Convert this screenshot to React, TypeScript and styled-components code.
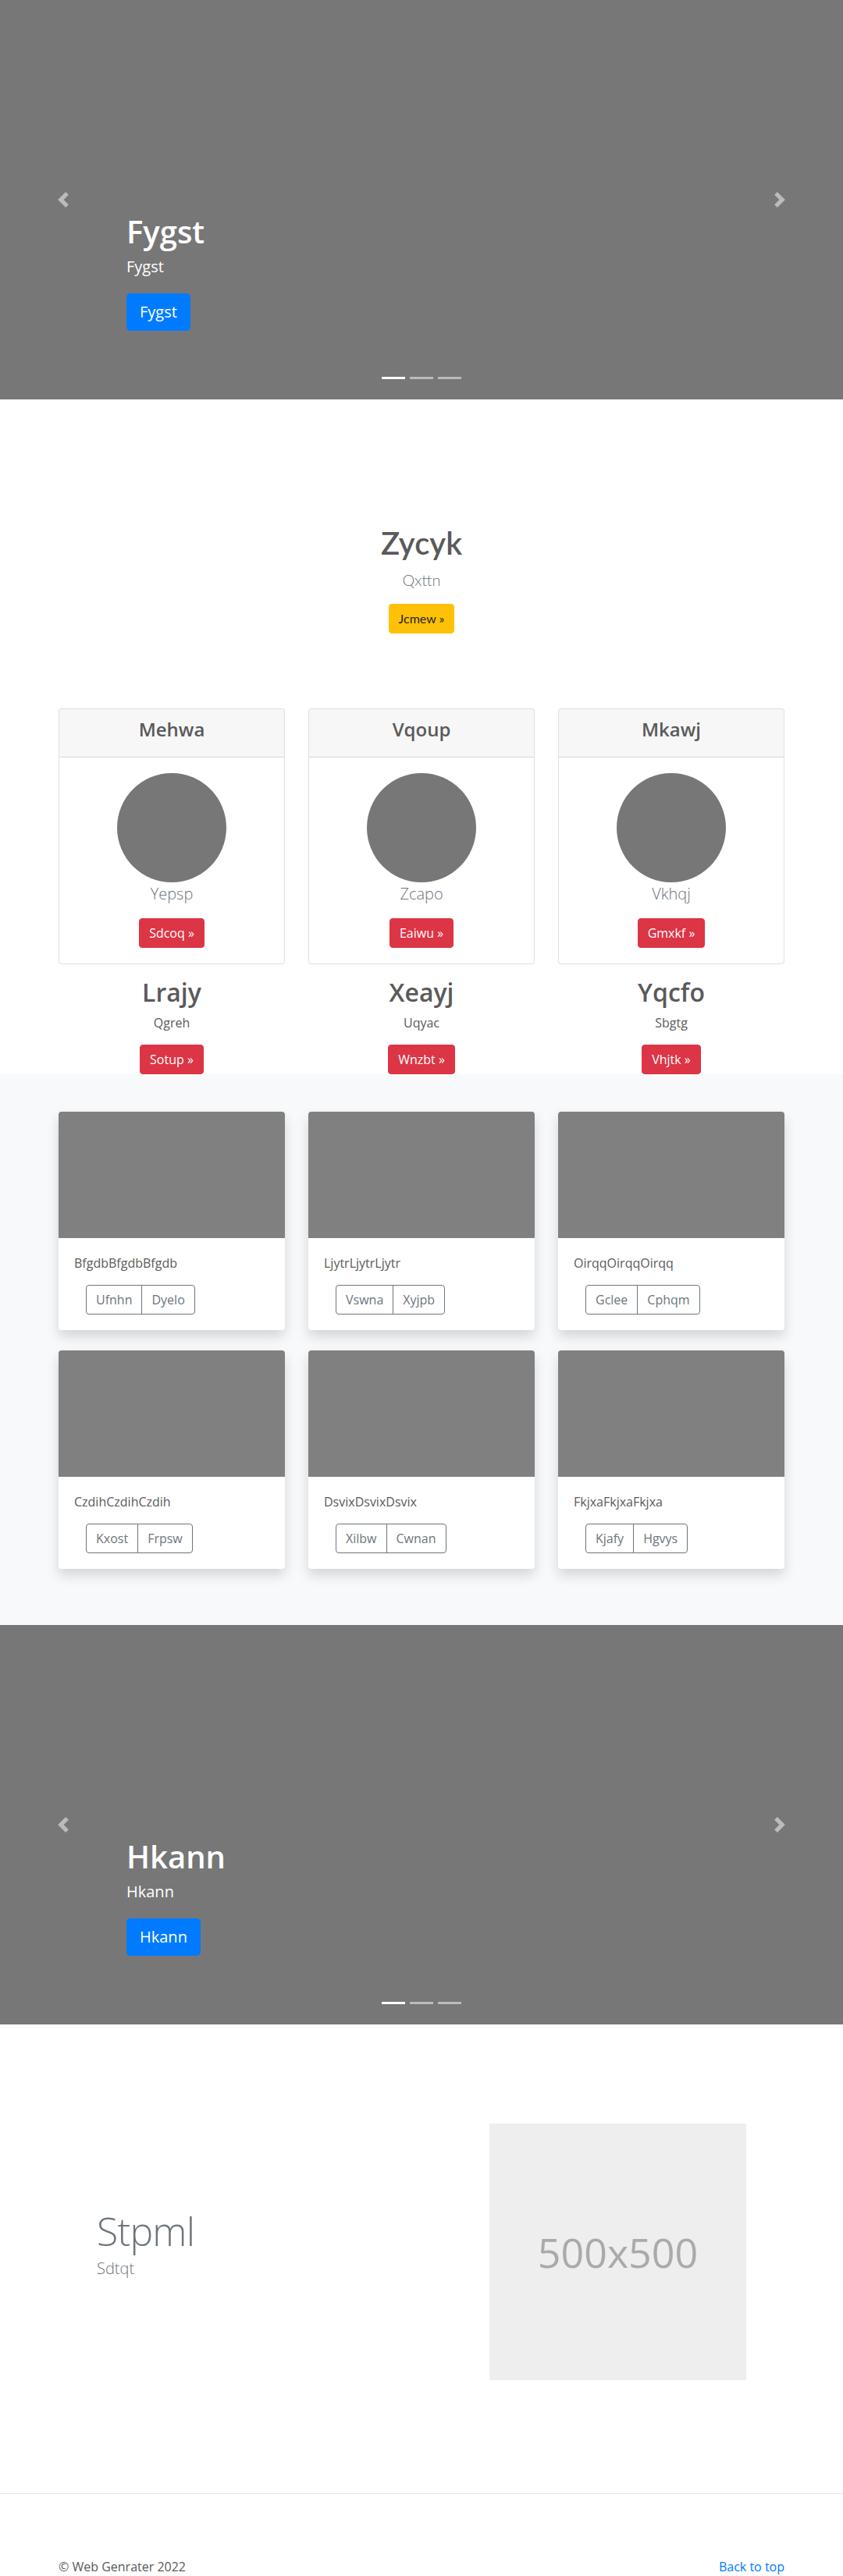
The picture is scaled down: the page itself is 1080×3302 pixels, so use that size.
import styled, { createGlobalStyle } from 'styled-components'

const GlobalStyle = createGlobalStyle`
  * {
    box-sizing: border-box;
  }
  body {
    margin: 0;
    font-family: "Open Sans", "Noto Sans", sans-serif;
    font-size: 16px;
    line-height: 1.5;
    color: #5a5a5a;
    background: #fff;
  }
`

const Carousel = styled.section<{ $mb?: number }>`
  position: relative;
  height: 512px;
  background-color: #777;
  margin-bottom: ${(p) => p.$mb ?? 0}px;
  overflow: hidden;
`

const Control = styled.a<{ $side: 'prev' | 'next' }>`
  position: absolute;
  top: 0;
  bottom: 0;
  ${(p) => (p.$side === 'prev' ? 'left: 0;' : 'right: 0;')}
  width: 15%;
  display: flex;
  align-items: center;
  justify-content: center;
  opacity: 0.5;
  z-index: 2;
`

const Indicators = styled.ol`
  position: absolute;
  left: 0;
  right: 0;
  bottom: 0;
  margin: 0 0 16px;
  padding: 0;
  display: flex;
  justify-content: center;
  list-style: none;
  z-index: 2;
`

const Dot = styled.li<{ $active?: boolean }>`
  width: 30px;
  height: 3px;
  margin: 10px 3px;
  background-color: #fff;
  opacity: ${(p) => (p.$active ? 1 : 0.5)};
`

const Caption = styled.div`
  position: absolute;
  left: 15%;
  right: 15%;
  bottom: 48px;
  padding: 20px 0;
  color: #fff;
  text-align: left;
  z-index: 1;
`

const CaptionTitle = styled.h1`
  margin: 0 0 6px;
  font-size: 40px;
  font-weight: 600;
  line-height: 1.2;
`

const CaptionText = styled.p`
  margin: 0 0 19px;
  font-size: 20px;
  line-height: 1.5;
`

const CaptionActions = styled.div`
  display: flex;
  margin-bottom: 20px;
`

const Button = styled.a<{ $variant: 'primary' | 'warning' | 'danger'; $lg?: boolean }>`
  display: inline-block;
  padding: ${(p) => (p.$lg ? '8px 16px' : '6px 12px')};
  font-size: ${(p) => (p.$lg ? '20px' : '16px')};
  line-height: 1.5;
  border: 1px solid transparent;
  border-radius: ${(p) => (p.$lg ? '4.8px' : '4px')};
  text-decoration: none;
  white-space: nowrap;
  color: ${(p) => (p.$variant === 'warning' ? '#212529' : '#fff')};
  background-color: ${(p) =>
    p.$variant === 'primary' ? '#007bff' : p.$variant === 'warning' ? '#ffc107' : '#dc3545'};
  border-color: ${(p) =>
    p.$variant === 'primary' ? '#007bff' : p.$variant === 'warning' ? '#ffc107' : '#dc3545'};
`

const Jumbotron = styled.section`
  padding: 96px 0;
  text-align: center;
  font-family: Lato, "Open Sans", sans-serif;
`

const JumboTitle = styled.h1`
  margin: 0 0 8px;
  font-size: 40px;
  font-weight: 600;
  line-height: 1.2;
  color: #5a5a5a;
`

const Lead = styled.p`
  margin: 0 0 16px;
  font-size: 20px;
  font-weight: 300;
  line-height: 1.5;
  color: #6c757d;
`

const Container = styled.div`
  width: 960px;
  margin: 0 auto;
  padding: 0 15px;
`

const ThreeCols = styled.div<{ $rowGap?: number }>`
  display: grid;
  grid-template-columns: repeat(3, 1fr);
  column-gap: 30px;
  row-gap: ${(p) => p.$rowGap ?? 0}px;
`

const PriceCard = styled.div`
  border: 1px solid rgba(0, 0, 0, 0.125);
  border-radius: 4px;
  margin-bottom: 17px;
  background: #fff;
  overflow: hidden;
`

const PriceHeader = styled.div`
  padding: 12px 20px;
  background-color: rgba(0, 0, 0, 0.03);
  border-bottom: 1px solid rgba(0, 0, 0, 0.125);
  text-align: center;
`

const PriceTitle = styled.h4`
  margin: 0 0 8px;
  font-size: 24px;
  font-weight: 600;
  line-height: 1.2;
`

const PriceBody = styled.div`
  padding: 20px;
  text-align: center;
`

const Avatar = styled.div`
  width: 140px;
  height: 140px;
  margin: 0 auto;
  border-radius: 50%;
  background-color: #777;
`

const Marketing = styled.div`
  text-align: center;
`

const MarketingTitle = styled.h2`
  margin: 0 0 8px;
  font-size: 32px;
  font-weight: 600;
  line-height: 1.2;
`

const MarketingText = styled.p`
  margin: 0 0 16px;
`

const ButtonRow = styled.div`
  display: flex;
  justify-content: center;
`

const Album = styled.section`
  padding: 48px 0 72px;
  background-color: #f8f9fa;
`

const AlbumCard = styled.div`
  background: #fff;
  border-radius: 4px;
  overflow: hidden;
  box-shadow: 0 8px 16px rgba(0, 0, 0, 0.15);
`

const Thumb = styled.div`
  height: 162px;
  background-color: #808080;
`

const AlbumBody = styled.div`
  padding: 20px;
`

const CardText = styled.p`
  margin: 0 0 16px;
`

const BtnGroup = styled.div`
  display: inline-flex;
  margin-left: 15px;
`

const GroupButton = styled.a`
  padding: 6px 12px;
  font-size: 16px;
  line-height: 1.5;
  color: #6c757d;
  border: 1px solid #6c757d;
  text-decoration: none;
  &:first-child {
    border-radius: 4px 0 0 4px;
  }
  &:last-child {
    margin-left: -1px;
    border-radius: 0 4px 4px 0;
  }
`

const Feature = styled.div`
  width: 960px;
  margin: 0 auto;
  padding: 63px 64px 145px;
  display: flex;
  align-items: center;
  justify-content: space-between;
`

const FeatureHeading = styled.h2`
  margin: 0 0 8px;
  font-size: 50px;
  font-weight: 300;
  line-height: 1;
  letter-spacing: -0.8px;
  color: #6c757d;
`

const Placeholder = styled.div`
  width: 329px;
  height: 329px;
  display: flex;
  align-items: center;
  justify-content: center;
  background-color: #eee;
  color: #aaa;
  font-size: 52px;
`

const Divider = styled.hr`
  margin: 0;
  border: 0;
  border-top: 1px solid rgba(0, 0, 0, 0.1);
`

const Footer = styled.footer`
  width: 960px;
  margin: 0 auto;
  padding: 81px 15px 0;
  display: flex;
  justify-content: space-between;
`

const FooterLink = styled.a`
  color: #007bff;
  text-decoration: none;
`

const Chevron = ({ dir }: { dir: 'prev' | 'next' }) => (
  <svg width="20" height="20" viewBox="0 0 8 8" fill="#fff">
    <path
      d={
        dir === 'prev'
          ? 'M5.25 0l-4 4 4 4 1.5-1.5L4.25 4l2.5-2.5L5.25 0z'
          : 'M2.75 0l-1.5 1.5L3.75 4l-2.5 2.5L2.75 8l4-4-4-4z'
      }
    />
  </svg>
)

const Slide = ({ title, mb }: { title: string; mb?: number }) => (
  <Carousel $mb={mb}>
    <Indicators>
      <Dot $active />
      <Dot />
      <Dot />
    </Indicators>
    <Caption>
      <CaptionTitle>{title}</CaptionTitle>
      <CaptionText>{title}</CaptionText>
      <CaptionActions>
        <Button $variant="primary" $lg href="#">
          {title}
        </Button>
      </CaptionActions>
    </Caption>
    <Control $side="prev" href="#">
      <Chevron dir="prev" />
    </Control>
    <Control $side="next" href="#">
      <Chevron dir="next" />
    </Control>
  </Carousel>
)

const pricing = [
  { title: 'Mehwa', lead: 'Yepsp', btn: 'Sdcoq' },
  { title: 'Vqoup', lead: 'Zcapo', btn: 'Eaiwu' },
  { title: 'Mkawj', lead: 'Vkhqj', btn: 'Gmxkf' },
]

const marketing = [
  { title: 'Lrajy', text: 'Qgreh', btn: 'Sotup' },
  { title: 'Xeayj', text: 'Uqyac', btn: 'Wnzbt' },
  { title: 'Yqcfo', text: 'Sbgtg', btn: 'Vhjtk' },
]

const album = [
  { text: 'Bfgdb', a: 'Ufnhn', b: 'Dyelo' },
  { text: 'Ljytr', a: 'Vswna', b: 'Xyjpb' },
  { text: 'Oirqq', a: 'Gclee', b: 'Cphqm' },
  { text: 'Czdih', a: 'Kxost', b: 'Frpsw' },
  { text: 'Dsvix', a: 'Xilbw', b: 'Cwnan' },
  { text: 'Fkjxa', a: 'Kjafy', b: 'Hgvys' },
]

const App = () => {
  return (
    <>
      <GlobalStyle />
      <Slide title="Fygst" mb={64} />

      <Jumbotron>
        <JumboTitle>Zycyk</JumboTitle>
        <Lead>Qxttn</Lead>
        <Button $variant="warning" href="#">
          Jcmew »
        </Button>
      </Jumbotron>

      <Container>
        <ThreeCols>
          {pricing.map((c) => (
            <PriceCard key={c.title}>
              <PriceHeader>
                <PriceTitle>{c.title}</PriceTitle>
              </PriceHeader>
              <PriceBody>
                <Avatar />
                <Lead>{c.lead}</Lead>
                <Button $variant="danger" href="#">
                  {c.btn} »
                </Button>
              </PriceBody>
            </PriceCard>
          ))}
          {marketing.map((m) => (
            <Marketing key={m.title}>
              <MarketingTitle>{m.title}</MarketingTitle>
              <MarketingText>{m.text}</MarketingText>
              <ButtonRow>
                <Button $variant="danger" href="#">
                  {m.btn} »
                </Button>
              </ButtonRow>
            </Marketing>
          ))}
        </ThreeCols>
      </Container>

      <Album>
        <Container>
          <ThreeCols $rowGap={26}>
            {album.map((a) => (
              <AlbumCard key={a.text}>
                <Thumb />
                <AlbumBody>
                  <CardText>{a.text + a.text + a.text}</CardText>
                  <BtnGroup>
                    <GroupButton href="#">{a.a}</GroupButton>
                    <GroupButton href="#">{a.b}</GroupButton>
                  </BtnGroup>
                </AlbumBody>
              </AlbumCard>
            ))}
          </ThreeCols>
        </Container>
      </Album>

      <Slide title="Hkann" mb={64} />

      <Feature>
        <div>
          <FeatureHeading>Stpml</FeatureHeading>
          <Lead>Sdtqt</Lead>
        </div>
        <Placeholder>500x500</Placeholder>
      </Feature>

      <Divider />

      <Footer>
        <span>© Web Genrater 2022</span>
        <FooterLink href="#">Back to top</FooterLink>
      </Footer>
    </>
  )
}

export default App
